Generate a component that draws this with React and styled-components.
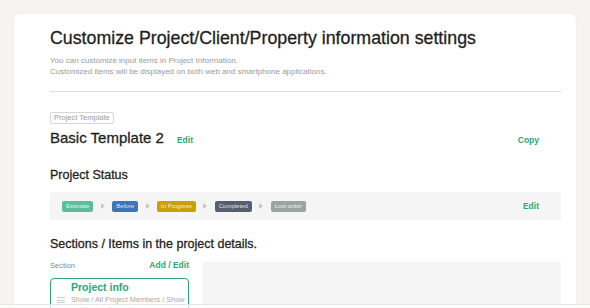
import React from 'react';
import styled, { createGlobalStyle } from 'styled-components';

const GlobalStyle = createGlobalStyle`
  html, body {
    margin: 0;
    padding: 0;
    background: #f5f4f2;
    font-family: "Liberation Sans", Arial, sans-serif;
    color: #1f1f1f;
    overflow: hidden;
  }
`;

const GREEN = '#2aa872';

const Page = styled.div`
  padding: 14px 14px 0 14px;
  height: 308px;
  box-sizing: border-box;
`;
const Card = styled.div`
  background: #fff;
  border-radius: 6px 6px 0 0;
  box-shadow: 0 0 2px rgba(0, 0, 0, 0.06);
  padding: 13px 15px 0 36px;
  height: 100%;
  box-sizing: border-box;
  overflow: hidden;
`;
const Title = styled.h1`
  margin: 0;
  font-size: 17.8px;
  font-weight: 400;
  line-height: 22px;
  -webkit-text-stroke: 0.3px #1f1f1f;
`;
const Lead = styled.p`
  margin: 6px 0 0;
  font-size: 8px;
  line-height: 11px;
  color: #9a9a9a;
`;
const Divider = styled.hr`
  margin: 14px 0 0;
  border: none;
  border-top: 1px solid #dcdcdc;
`;
const Tag = styled.span`
  display: inline-block;
  margin-top: 20px;
  padding: 0 3px;
  border: 1px solid #d6d6d6;
  border-radius: 2px;
  font-size: 7.5px;
  line-height: 10px;
  color: #9a9a9a;
`;
const Row = styled.div`
  display: flex;
  align-items: baseline;
  justify-content: space-between;
  padding-right: 22px;
  margin-top: 4px;
`;
const TitleGroup = styled.div`
  display: flex;
  align-items: baseline;
  gap: 13px;
`;
const TemplateName = styled.h2`
  margin: 0;
  font-size: 15px;
  font-weight: 400;
  line-height: 20px;
  -webkit-text-stroke: 0.3px #1f1f1f;
`;
const Link = styled.span`
  color: ${GREEN};
  font-size: 8.5px;
  font-weight: 700;
`;
const SectionTitle = styled.h3`
  margin: ${(p) => p.top}px 0 0;
  font-size: 12.5px;
  font-weight: 400;
  line-height: 16px;
  -webkit-text-stroke: 0.3px #1f1f1f;
`;
const StatusBand = styled.div`
  margin-top: 9px;
  height: 28px;
  background: #f5f5f5;
  display: flex;
  align-items: center;
  justify-content: space-between;
  padding: 0 22px 0 12px;
`;
const Flow = styled.div`
  display: flex;
  align-items: center;
  gap: 6px;
`;
const Pill = styled.span`
  background: ${(p) => p.bg};
  color: rgba(255, 255, 255, 0.85);
  font-size: 6px;
  line-height: 11px;
  height: 11px;
  padding: 0 4px;
  border-radius: 2px;
`;
const Arrow = styled.span`
  width: 0;
  height: 0;
  margin: 0 1.5px;
  border-top: 3px solid transparent;
  border-bottom: 3px solid transparent;
  border-left: 4px solid #c8c8c8;
`;
const Columns = styled.div`
  display: grid;
  grid-template-columns: 139px 1fr;
  gap: 14px;
  margin-top: 10px;
`;
const SideHead = styled.div`
  display: flex;
  justify-content: space-between;
  align-items: baseline;
  line-height: 6px;
`;
const SmallLabel = styled.span`
  font-size: 7.5px;
  color: #8a8a8a;
`;
const SectionCard = styled.div`
  margin-top: 9px;
  border: 1.5px solid ${GREEN};
  border-radius: 4px;
  display: flex;
  gap: 6px;
  padding: 1px 1px 4px 6px;
  height: 40px;
`;
const Handle = styled.div`
  display: flex;
  flex-direction: column;
  gap: 1.5px;
  margin-top: 17px;
  span {
    width: 8px;
    height: 1px;
    background: #cfcfcf;
  }
`;
const CardText = styled.div`
  display: flex;
  flex-direction: column;
`;
const CardTitle = styled.span`
  color: ${GREEN};
  font-size: 10.5px;
  font-weight: 700;
  line-height: 14px;
`;
const CardSub = styled.span`
  color: #a8a8a8;
  font-size: 7.3px;
  line-height: 10px;
  margin-top: 1px;
`;
const Preview = styled.div`
  background: #f5f5f5;
  height: 60px;
`;
const Footer = styled.div`
  position: fixed;
  left: 0;
  right: 0;
  bottom: 0;
  height: 3px;
  background: rgba(255, 255, 255, 0.7);
  border-top: 1px solid #e6e6e6;
`;

const statuses = [
  { label: 'Estimate', bg: '#5cbd9b' },
  { label: 'Before', bg: '#3b76b6' },
  { label: 'In Progress', bg: '#c9a107' },
  { label: 'Completed', bg: '#55606d' },
  { label: 'Lost order', bg: '#9ca4a1' },
];

export default function App() {
  return (
    <>
      <GlobalStyle />
      <Page>
        <Card>
          <Title>Customize Project/Client/Property information settings</Title>
          <Lead>
            You can customize input items in Project Information.
            <br />
            Customized items will be displayed on both web and smartphone applications.
          </Lead>
          <Divider />
          <Tag>Project Template</Tag>
          <Row>
            <TitleGroup>
              <TemplateName>Basic Template 2</TemplateName>
              <Link>Edit</Link>
            </TitleGroup>
            <Link>Copy</Link>
          </Row>
          <SectionTitle top={19}>Project Status</SectionTitle>
          <StatusBand>
            <Flow>
              {statuses.map((s, i) => (
                <React.Fragment key={s.label}>
                  {i > 0 && <Arrow />}
                  <Pill bg={s.bg}>{s.label}</Pill>
                </React.Fragment>
              ))}
            </Flow>
            <Link>Edit</Link>
          </StatusBand>
          <SectionTitle top={16}>Sections / Items in the project details.</SectionTitle>
          <Columns>
            <div>
              <SideHead>
                <SmallLabel>Section</SmallLabel>
                <Link>Add / Edit</Link>
              </SideHead>
              <SectionCard>
                <Handle>
                  <span />
                  <span />
                  <span />
                </Handle>
                <CardText>
                  <CardTitle>Project info</CardTitle>
                  <CardSub>Show / All Project Members / Show on "Create Project"</CardSub>
                </CardText>
              </SectionCard>
            </div>
            <Preview />
          </Columns>
        </Card>
      </Page>
      <Footer />
    </>
  );
}
